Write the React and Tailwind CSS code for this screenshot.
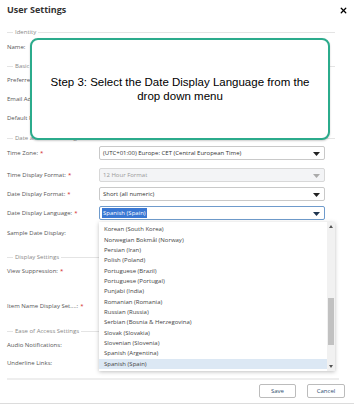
import React from 'react';
import { X } from 'lucide-react';

const languages = [
    'Korean (South Korea)',
    'Norwegian Bokmål (Norway)',
    'Persian (Iran)',
    'Polish (Poland)',
    'Portuguese (Brazil)',
    'Portuguese (Portugal)',
    'Punjabi (India)',
    'Romanian (Romania)',
    'Russian (Russia)',
    'Serbian (Bosnia & Herzegovina)',
    'Slovak (Slovakia)',
    'Slovenian (Slovenia)',
    'Spanish (Argentina)',
    'Spanish (Spain)',
];

const Legend = ({ label, className }) => (
    <div className={`flex items-center h-[10px] ${className}`}>
        <div className="w-[6px] h-px bg-[#e4e4e4]" />
        <span className="px-[2px] text-[6px] text-[#888]">{label}</span>
        <div className="flex-1 h-px bg-[#e4e4e4]" />
    </div>
);

const Label = ({ children, required }) => (
    <div className="w-[92px] shrink-0 text-[6px] text-[#555] whitespace-nowrap">
        {children}
        {required && <span className="text-[#d21f1f] ml-[2px]">*</span>}
    </div>
);

const Row = ({ label, required, className, children }) => (
    <div className={`flex items-center h-[16px] ${className}`}>
        <Label required={required}>{label}</Label>
        <div className="relative w-[226px]">{children}</div>
    </div>
);

const Arrow = ({ color }) => (
    <svg width="7" height="4" viewBox="0 0 7 4" className="absolute right-[4px] top-[5px]">
        <path d="M0 0 H7 L3.5 4 Z" fill={color} />
    </svg>
);

const Select = ({ value, disabled }) => (
    <div
        className={`relative h-[14px] border rounded-[2px] flex items-center pl-[3px] text-[6px] ${
            disabled ? 'bg-[#f3f4f6] border-[#d8d8d8] text-[#999]' : 'bg-white border-[#c9c9c9] text-[#333]'
        }`}
    >
        {value}
        <Arrow color={disabled ? '#aaa' : '#222'} />
    </div>
);

export default function App() {
    return (
        <div className="relative w-[354px] h-[404px] bg-white overflow-hidden font-['Open_Sans',sans-serif]">
            {/* Header */}
            <div className="flex items-start justify-between h-[27px] pl-[7px] pr-[6px] pt-[3px]">
                <h1 className="text-[9px] font-bold text-[#333]">User Settings</h1>
                <X size={9} strokeWidth={3.5} className="text-black mt-[3px]" />
            </div>

            <div className="pl-[7px] pr-[19px]">
                <Legend label="Identity" />
                <Row label="Name:" className="mt-[2px]" />

                <Legend label="Basic Information" className="mt-[6px]" />
                <Row label="Preferred Name:" className="mt-px" />
                <Row label="Email Address:" className="mt-[3px]" />
                <Row label="Default Page:" className="mt-[3px]" />

                <Legend label="Date and Time Settings" className="mt-[7px]" />
                <Row label="Time Zone:" required className="mt-[2px]">
                    <Select value="(UTC+01:00) Europe: CET (Central European Time)" />
                </Row>
                <Row label="Time Display Format:" required className="mt-[6px]">
                    <Select value="12 Hour Format" disabled />
                </Row>
                <Row label="Date Display Format:" required className="mt-[3px]">
                    <Select value="Short (all numeric)" />
                </Row>
                <Row label="Date Display Language:" required className="mt-[3px] relative z-10">
                    <div className="relative h-[14px] border border-[#6f9bcc] rounded-[2px] flex items-center pl-[2px] text-[6px] bg-white">
                        <span className="bg-[#3a78d3] text-white px-px leading-[10px]">Spanish (Spain)</span>
                        <Arrow color="#1f3550" />
                    </div>
                    {/* Open list */}
                    <div className="absolute left-0 top-[16px] w-[236px] h-[149px] bg-white shadow-[0_1px_4px_rgba(0,0,0,0.25)] flex overflow-hidden">
                        <div className="flex-1 overflow-hidden pt-[2.5px]">
                            {languages.map((lang) => (
                                <div
                                    key={lang}
                                    className={`h-[10.35px] flex items-center pl-[5px] text-[6px] text-[#444] whitespace-nowrap ${
                                        lang === 'Spanish (Spain)' ? 'bg-[#dce8f4]' : ''
                                    }`}
                                >
                                    {lang}
                                </div>
                            ))}
                        </div>
                        <div className="w-[8px] bg-[#f1f1f1] flex flex-col items-center py-[3px]">
                            <svg width="4" height="3" viewBox="0 0 4 3">
                                <path d="M0 3 L2 0 L4 3 Z" fill="#555" />
                            </svg>
                            <div className="w-[6px] h-[47px] bg-[#c1c1c1] mt-[70px]" />
                            <svg width="4" height="3" viewBox="0 0 4 3" className="mt-auto">
                                <path d="M0 0 H4 L2 3 Z" fill="#555" />
                            </svg>
                        </div>
                    </div>
                </Row>
                <Row label="Sample Date Display:" className="mt-[4px]" />

                <Legend label="Display Settings" className="mt-[11px]" />
                <Row label="View Suppression:" required className="mt-px" />
                <Row label="Item Name Display Set....:" required className="mt-[19px]" />

                <Legend label="Ease of Access Settings" className="mt-[12px]" />
                <Row label="Audio Notifications:" className="mt-px" />
                <Row label="Underline Links:" className="mt-[2px]" />
            </div>

            {/* Footer */}
            <div className="ml-[7px] mr-[15px] mt-[7px] h-[2px] bg-[#eeeeee]" />
            <div className="flex justify-end gap-[11px] pr-[9px] mt-[4px]">
                <button className="w-[37px] h-[14px] border border-[#bcbcbc] rounded-[2px] text-[6px] text-[#2f4f6f] bg-white">
                    Save
                </button>
                <button className="w-[38px] h-[14px] border border-[#bcbcbc] rounded-[2px] text-[6px] text-[#2f4f6f] bg-white">
                    Cancel
                </button>
            </div>
            <div className="mt-[5px] h-px bg-[#dcdcdc]" />

            {/* Tutorial callout */}
            <div className="absolute left-[30px] top-[38px] w-[300px] h-[102px] bg-white border-2 border-[#2bab8c] rounded-[8px] shadow-[0_1px_2px_rgba(0,0,0,0.2)] flex items-center justify-center z-20">
                <p className="w-[264px] text-center text-[11.5px] leading-[14px] text-black font-['Liberation_Sans',Arial,sans-serif]">
                    Step 3: Select the Date Display Language from the drop down menu
                </p>
            </div>
        </div>
    );
}
